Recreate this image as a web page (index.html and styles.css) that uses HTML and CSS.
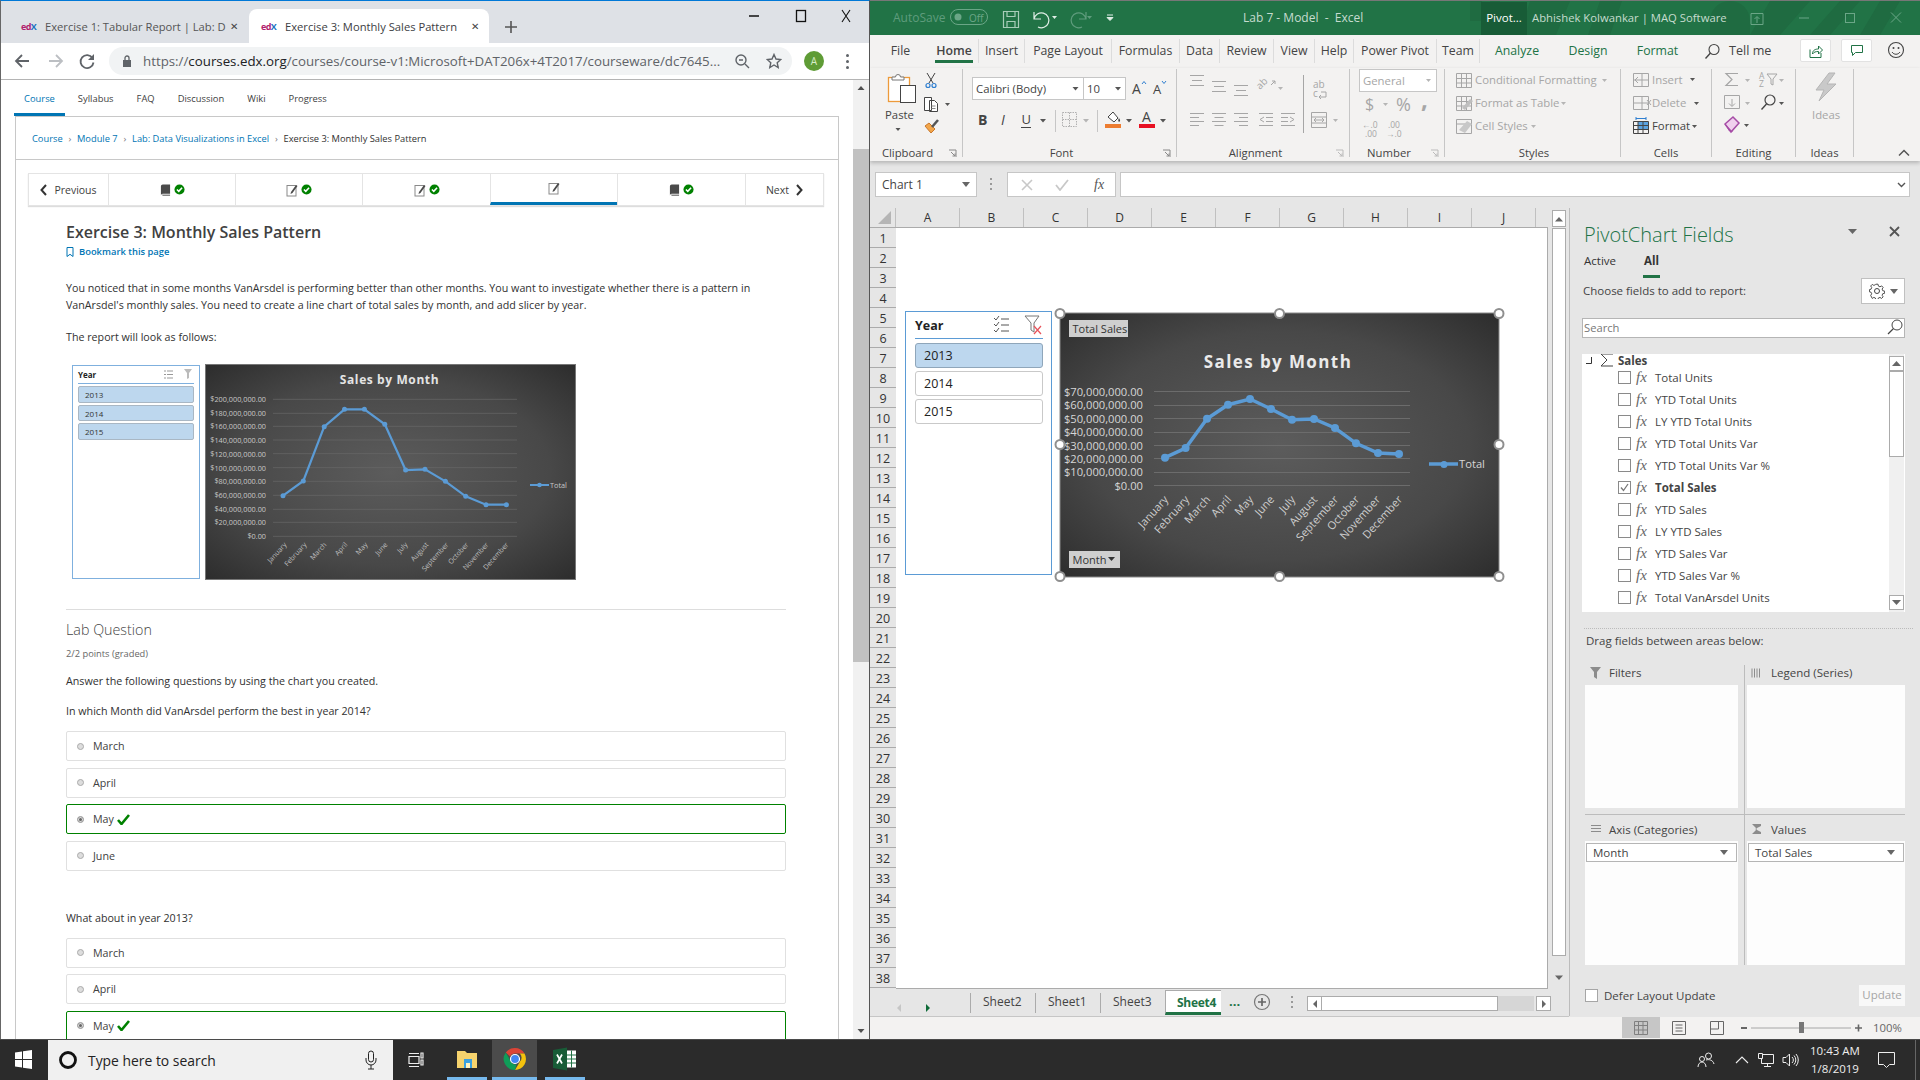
FILE: index.html
```html
<!DOCTYPE html>
<html lang="en">
<head>
<meta charset="utf-8">
<title>edX and Excel</title>
<link rel="stylesheet" href="styles.css">
</head>
<body>
<svg class="defs" width="0" height="0">
  <defs>
    <radialGradient id="dark" r=".72"><stop offset="0" stop-color="#5c5c5c"/><stop offset="0.6" stop-color="#484848"/><stop offset="1" stop-color="#2b2b2b"/></radialGradient>
    <symbol id="book" viewBox="0 0 12 14"><path d="M3 1h8v10H3a2 2 0 0 0-2 2V3a2 2 0 0 1 2-2z" fill="#4a4a4a"/><path d="M2 12h9v1.5H3z" fill="#888"/></symbol>
    <symbol id="pen" viewBox="0 0 12 14"><rect x="1" y="2.5" width="9" height="10.5" fill="#fff" stroke="#8a8a8a"/><path d="M5 9l5-7 1.5 1-5 7-2 1z" fill="#4a4a4a"/></symbol>
    <symbol id="ok" viewBox="0 0 12 12"><circle cx="6" cy="6" r="5.5" fill="#008100"/><path d="M3.2 6l2 2 3.6-4" fill="none" stroke="#fff" stroke-width="1.7"/></symbol>
    <symbol id="tick" viewBox="0 0 13 11"><path d="M1 6l3.500 4L12 1" fill="none" stroke="#008100" stroke-width="2.600"/></symbol>
  </defs>
</svg>
<div class="desktop">

  <section class="chrome">
    <div class="tabstrip">
      <div class="tab">
        <span class="fav"><b class="pink">ed</b><b class="blue">X</b></span>
        <span class="tab-title">Exercise 1: Tabular Report | Lab: D</span>
        <span class="tab-x">✕</span>
      </div>
      <div class="tab tab-on">
        <span class="fav"><b class="pink">ed</b><b class="blue">X</b></span>
        <span class="tab-title">Exercise 3: Monthly Sales Pattern</span>
        <span class="tab-x">✕</span>
      </div>
      <svg class="newtab" width="20" height="20" viewBox="0 0 20 20"><path d="M10 4v12M4 10h12" stroke="#555" stroke-width="1.600"/></svg>
      <svg class="winbtns" width="120" height="30" viewBox="0 0 120 30">
        <path d="M0 15h10" stroke="#111" stroke-width="1.500"/>
        <rect x="47.500" y="9.500" width="9" height="11" fill="none" stroke="#111" stroke-width="1.300"/>
        <path d="M93 9l8 12M101 9l-8 12" stroke="#111" stroke-width="1.100"/>
      </svg>
    </div>
    <div class="toolbar">
      <svg class="nav-ic" width="32" height="20" viewBox="0 0 32 20"><path d="M22 10H10M15 4l-6 6 6 6" fill="none" stroke="#5f6368" stroke-width="1.800"/></svg>
      <svg class="nav-ic" width="32" height="20" viewBox="0 0 32 20"><path d="M10 10h12M17 4l6 6-6 6" fill="none" stroke="#bcbfc3" stroke-width="1.800"/></svg>
      <svg class="nav-ic" width="32" height="20" viewBox="0 0 32 20"><path d="M21.500 7a6.500 6.500 0 1 0 1 4.500" fill="none" stroke="#5f6368" stroke-width="1.800"/><path d="M23 3v6h-6z" fill="#5f6368"/></svg>
      <div class="omni">
        <svg width="12" height="14" viewBox="0 0 12 14"><rect x="2" y="6" width="8" height="7" fill="#5f6368"/><path d="M4 6V4a2 2 0 0 1 4 0v2" fill="none" stroke="#5f6368" stroke-width="1.300"/></svg>
        <div class="url">https://<span class="host">courses.edx.org</span>/courses/course-v1:Microsoft+DAT206x+4T2017/courseware/dc7645...</div>
        <svg class="omni-zoom" width="16" height="16" viewBox="0 0 16 16"><circle cx="7" cy="7" r="5" fill="none" stroke="#5f6368" stroke-width="1.400"/><path d="M11 11l4 4M5 7h4" stroke="#5f6368" stroke-width="1.400"/></svg>
        <svg class="omni-star" width="16" height="16" viewBox="0 0 16 16"><path d="M8 1.500l2 4.500 4.800.5-3.600 3.200 1 4.800L8 12l-4.200 2.500 1-4.800L1.200 6.500 6 6z" fill="none" stroke="#5f6368" stroke-width="1.400"/></svg>
      </div>
      <div class="avatar">A</div>
      <div class="kebab"><i></i><i></i><i></i></div>
    </div>
    <div class="viewport">
      <div class="page">
        <nav class="coursetabs">
          <a class="ct ct-on">Course</a><a class="ct">Syllabus</a><a class="ct">FAQ</a><a class="ct">Discussion</a><a class="ct">Wiki</a><a class="ct">Progress</a>
        </nav>
        <div class="card">
          <div class="crumbs"><a>Course</a><i>›</i><a>Module 7</a><i>›</i><a>Lab: Data Visualizations in Excel</a><i>›</i><span>Exercise 3: Monthly Sales Pattern</span></div>
          <div class="seq">
            <div class="seq-cell seq-end"><svg width="7" height="12" viewBox="0 0 7 12"><path d="M6 1L1.500 6 6 11" fill="none" stroke="#333" stroke-width="2"/></svg><span>Previous</span></div>
            <div class="seq-cell"><svg width="11" height="14"><use href="#book"/></svg><svg width="11" height="11"><use href="#ok"/></svg></div>
            <div class="seq-cell"><svg width="12" height="14"><use href="#pen"/></svg><svg width="11" height="11"><use href="#ok"/></svg></div>
            <div class="seq-cell"><svg width="12" height="14"><use href="#pen"/></svg><svg width="11" height="11"><use href="#ok"/></svg></div>
            <div class="seq-cell seq-on"><svg width="12" height="14"><use href="#pen"/></svg></div>
            <div class="seq-cell"><svg width="11" height="14"><use href="#book"/></svg><svg width="11" height="11"><use href="#ok"/></svg></div>
            <div class="seq-cell seq-end"><span>Next</span><svg width="7" height="12" viewBox="0 0 7 12"><path d="M1 1l4.500 5L1 11" fill="none" stroke="#333" stroke-width="2"/></svg></div>
          </div>
          <article class="unit">
            <h1 class="unit-title">Exercise 3: Monthly Sales Pattern</h1>
            <div class="bookmark"><svg width="8" height="10" viewBox="0 0 8 10"><path d="M1 .5h6v9L4 7.300 1 9.500z" fill="none" stroke="#0075b4"/></svg>Bookmark this page</div>
            <p class="para first">You noticed that in some months VanArsdel is performing better than other months. You want to investigate whether there is a pattern in VanArsdel's monthly sales. You need to create a line chart of total sales by month, and add slicer by year.</p>
            <p class="para second">The report will look as follows:</p>
            <div class="figure">
              <div class="mini-slicer">
                <div class="ms-head"><b>Year</b><svg width="30" height="11" viewBox="0 0 30 11"><path d="M0 2h2M0 5.500h2M0 9h2M3 2h6M3 5.500h6M3 9h6" stroke="#999"/><path d="M20 0h8l-3 4v5l-2 1V4z" fill="#bbb"/></svg></div>
                <div class="ms-item">2013</div><div class="ms-item">2014</div><div class="ms-item">2015</div>
              </div>
              <svg class="mini-chart" width="371" height="216" viewBox="205 364 371 216">
                <rect x="205.500" y="364.500" width="370" height="215" fill="url(#dark)" stroke="#777"/>
                <text class="mc-title" x="389.500" y="384" text-anchor="middle">Sales by Month</text>
                <g stroke="#686868" stroke-width=".7"><path d="M273 399.300h244M273 413.300h244M273 426.300h244M273 440h244M273 453.700h244M273 467.700h244M273 481.300h244M273 495.300h244M273 509.300h244M273 522.300h244M273 536.300h244"/></g>
                <g class="mc-y" text-anchor="end">
                  <text x="266" y="402">$200,000,000.00</text><text x="266" y="416">$180,000,000.00</text><text x="266" y="429">$160,000,000.00</text><text x="266" y="443">$140,000,000.00</text><text x="266" y="456.500">$120,000,000.00</text><text x="266" y="470.500">$100,000,000.00</text><text x="266" y="484">$80,000,000.00</text><text x="266" y="498">$60,000,000.00</text><text x="266" y="512">$40,000,000.00</text><text x="266" y="525">$20,000,000.00</text><text x="266" y="539">$0.00</text>
                </g>
                <polyline points="283,495.700 303.300,481 324.200,426.700 344.500,409.300 364.400,409.300 384.800,424.300 405.600,470 425,469.300 445.400,481.300 465.700,496.300 486,504.700 506.400,504.700" fill="none" stroke="#5b9bd5" stroke-width="2.200"/>
                <g fill="#5b9bd5"><circle cx="283" cy="495.700" r="2.500"/><circle cx="303.300" cy="481" r="2.500"/><circle cx="324.200" cy="426.700" r="2.500"/><circle cx="344.500" cy="409.300" r="2.500"/><circle cx="364.400" cy="409.300" r="2.500"/><circle cx="384.800" cy="424.300" r="2.500"/><circle cx="405.600" cy="470" r="2.500"/><circle cx="425" cy="469.300" r="2.500"/><circle cx="445.400" cy="481.300" r="2.500"/><circle cx="465.700" cy="496.300" r="2.500"/><circle cx="486" cy="504.700" r="2.500"/><circle cx="506.400" cy="504.700" r="2.500"/></g>
                <g class="mc-x" text-anchor="end">
                  <text transform="translate(287,545) rotate(-48)">January</text><text transform="translate(307,545) rotate(-48)">February</text><text transform="translate(327,545) rotate(-48)">March</text><text transform="translate(348,545) rotate(-48)">April</text><text transform="translate(368,545) rotate(-48)">May</text><text transform="translate(388,545) rotate(-48)">June</text><text transform="translate(408,545) rotate(-48)">July</text><text transform="translate(429,545) rotate(-48)">August</text><text transform="translate(449,545) rotate(-48)">September</text><text transform="translate(469,545) rotate(-48)">October</text><text transform="translate(489,545) rotate(-48)">November</text><text transform="translate(509,545) rotate(-48)">December</text>
                </g>
                <path d="M530 485h19" stroke="#5b9bd5" stroke-width="2"/><circle cx="539.500" cy="485" r="2.300" fill="#5b9bd5"/>
                <text class="mc-y" x="550" y="487.500">Total</text>
              </svg>
            </div>
            <hr class="rule">
            <h2 class="lab-q">Lab Question</h2>
            <div class="points">2/2 points (graded)</div>
            <p class="q q-a">Answer the following questions by using the chart you created.</p>
            <p class="q q-b">In which Month did VanArsdel perform the best in year 2014?</p>
            <div class="opt opt-first"><i class="radio"></i>March</div>
            <div class="opt"><i class="radio"></i>April</div>
            <div class="opt opt-ok"><i class="radio radio-on"></i>May<svg width="13" height="11"><use href="#tick"/></svg></div>
            <div class="opt"><i class="radio"></i>June</div>
            <p class="q q-c">What about in year 2013?</p>
            <div class="opt opt-first"><i class="radio"></i>March</div>
            <div class="opt"><i class="radio"></i>April</div>
            <div class="opt opt-ok"><i class="radio radio-on"></i>May<svg width="13" height="11"><use href="#tick"/></svg></div>
          </article>
        </div>
      </div>
      <div class="pagescroll">
        <svg width="16" height="16" viewBox="0 0 16 16"><path d="M4.500 10L8 6l3.500 4z" fill="#505050"/></svg>
        <div class="ps-track"><div class="ps-thumb"></div></div>
        <svg width="16" height="16" viewBox="0 0 16 16"><path d="M4.500 6L8 10l3.500-4z" fill="#505050"/></svg>
      </div>
    </div>
  </section>

  <section class="excel">
    <header class="xl-title">
      <svg class="xl-shapes" width="450" height="34" viewBox="0 0 450 34"><g fill="#1f6b41"><path d="M0 0h12v20H0zM20 0h10v34H20zM60 0h40l-14 34H50zM130 0h22l-12 34h-22zM240 20a20 20 0 0 1 40 0v14h-40zM300 0h40l-30 34h-30zM370 0h20l-30 34h-20zM410 0h20l-20 34h-20z"/></g></svg>
      <svg class="qat" width="255" height="34" viewBox="870 1 255 34">
        <text class="qat-t" x="893" y="22">AutoSave</text>
        <rect x="950.500" y="9.500" width="37" height="15" rx="7.500" fill="none" stroke="#6ba687"/>
        <circle cx="958" cy="17" r="3.500" fill="#6ba687"/><text class="qat-s" x="969" y="21.500">Off</text>
        <path d="M1003.500 11.500h15v16h-15zM1007 11.500v5h8v-5M1007 27.500v-6h8v6" fill="none" stroke="#a8cdb9" stroke-width="1.200"/>
        <path d="M1034 12v7h7M1034 19a7.500 7.500 0 1 1 4 8" fill="none" stroke="#dfeee6" stroke-width="1.200"/><path d="M1052 16l2.500 3 2.500-3z" fill="#dfeee6"/>
        <path d="M1086 12v7h-7M1086 19a7.500 7.500 0 1 0-4 8" fill="none" stroke="#5f9c7d" stroke-width="1.200"/><path d="M1087 16l2.500 3 2.500-3z" fill="#5f9c7d"/>
        <path d="M1107 15h6M1107 17.500l3 3 3-3z" stroke="#dfeee6" fill="#dfeee6"/>
      </svg>
      <span class="xl-doc">Lab 7 - Model&nbsp; -&nbsp; Excel</span>
      <span class="xl-pivot">Pivot...</span>
      <span class="xl-user">Abhishek Kolwankar | MAQ Software</span>
      <svg class="xl-win" width="170" height="34" viewBox="1750 1 170 34">
        <path d="M1751 13.500h12M1751 13.500h12v11h-12zM1757 23v-6M1754.500 19l2.500-2.500 2.500 2.500" fill="none" stroke="#6ba687"/>
        <path d="M1799 18h10" stroke="#6ba687"/>
        <rect x="1845.500" y="13.500" width="9" height="9" fill="none" stroke="#6ba687"/>
        <path d="M1891 12.500l10 10M1901 12.500l-10 10" stroke="#6ba687"/>
      </svg>
    </header>
    <nav class="xl-tabs">
      <a class="rt rt-file">File</a><a class="rt rt-home rt-sep"><b>Home</b></a><a class="rt rt-ins rt-sep">Insert</a><a class="rt rt-pl rt-sep">Page Layout</a><a class="rt rt-fo rt-sep">Formulas</a><a class="rt rt-da rt-sep">Data</a><a class="rt rt-re rt-sep">Review</a><a class="rt rt-vi rt-sep">View</a><a class="rt rt-he rt-sep">Help</a><a class="rt rt-pp rt-sep">Power Pivot</a><a class="rt rt-te rt-sep">Team</a><a class="rt rt-an rt-g">Analyze</a><a class="rt rt-de rt-g">Design</a><a class="rt rt-fm rt-g">Format</a>
      <svg class="tell-ic" width="16" height="17" viewBox="0 0 16 17"><circle cx="10" cy="6.500" r="5" fill="none" stroke="#444" stroke-width="1.100"/><path d="M6.500 10L1.500 15.500" stroke="#444" stroke-width="1.400"/></svg>
      <span class="tell">Tell me</span>
      <span class="xl-btn xl-share"><svg width="14" height="14" viewBox="0 0 14 14"><path d="M1 5.500v8h11V9M3.500 10c0-4 3-5 6-5V2l4 4-4 4V7.500c-3 0-4.500 .5-6 2.500z" fill="none" stroke="#217346"/></svg></span>
      <span class="xl-btn xl-comm"><svg width="14" height="13" viewBox="0 0 14 13"><path d="M1.500 1.500h11v7H5.500l-3 3v-3h-1z" fill="none" stroke="#217346"/></svg></span>
      <svg class="smile" width="18" height="18" viewBox="0 0 18 18"><circle cx="9" cy="9" r="7.500" fill="none" stroke="#444" stroke-width="1.100"/><circle cx="6.500" cy="7" r="1" fill="#444"/><circle cx="11.500" cy="7" r="1" fill="#444"/><path d="M5 11c2 3 6 3 8 0" fill="none" stroke="#444"/></svg>
    </nav>

    <div class="ribbon">
      <div class="grp g-clip">
        <svg class="gi" width="92" height="68" viewBox="870 69 92 68">
          <rect x="888.500" y="77.500" width="21" height="24" fill="#fff" stroke="#ed9a3a" stroke-width="1.300"/>
          <path d="M892 80v-3h3.500a2.500 2.500 0 0 1 5 0h3.500v3z" fill="#fff" stroke="#777"/>
          <rect x="900.500" y="85.500" width="15" height="17" fill="#fff" stroke="#444"/>
          <text class="r12" x="885" y="118.500">Paste</text>
          <path class="ar" d="M895.500 128h5l-2.500 3z"/>
          <path d="M927 73l6 10M935 73l-6 10" stroke="#444"/><circle cx="928" cy="85.500" r="2" fill="none" stroke="#2f7fd0" stroke-width="1.200"/><circle cx="934" cy="85.500" r="2" fill="none" stroke="#2f7fd0" stroke-width="1.200"/>
          <path d="M924.500 97.500h7v13h-7zM929.500 100.500h5l3 3v8h-8z" fill="#fff" stroke="#444"/><path d="M931.500 106h4M931.500 108.500h4" stroke="#888"/>
          <path class="ar" d="M945 103h5l-2.500 3z"/>
          <path d="M925 126l6 7 4-4-6-6z" fill="#f2a64a" stroke="#c9772b"/><path d="M932 127l6-7" stroke="#555" stroke-width="2.500"/>
        </svg>
        <div class="glabel">Clipboard<svg class="launch" width="9" height="9" viewBox="0 0 9 9"><path d="M1 1h7v7M3 3l4 4M4.500 7H7V4.500" fill="none" stroke="#888"/></svg></div>
      </div>
      <div class="grp g-font">
        <svg class="gi" width="214" height="68" viewBox="962 69 214 68">
          <rect x="971.500" y="77.500" width="153" height="22" fill="#fff" stroke="#c6c6c6"/><path d="M1082.500 77v23" stroke="#c6c6c6"/>
          <text class="r12 dk" x="975" y="93">Calibri (Body)</text><path class="ar" d="M1071.500 87h6l-3 3.500z"/>
          <text class="r12 dk" x="1086" y="93">10</text><path class="ar" d="M1114 87h6l-3 3.500z"/>
          <text class="r14 dk" x="1131" y="94">A</text><path d="M1141 84l2-2.500 2 2.500" fill="none" stroke="#2f7fd0"/>
          <text class="r13 dk" x="1152" y="94">A</text><path d="M1161 81l2 2.500 2-2.500" fill="none" stroke="#2f7fd0"/>
          <text class="r14 dk bd" x="977" y="125">B</text>
          <text class="r14 dk it" x="1000" y="125">I</text>
          <text class="r13 dk" x="1020.500" y="124">U</text><path d="M1020 127.500h10" stroke="#444"/>
          <path class="ar" d="M1039 119h6l-3 3.500z"/>
          <path d="M1054.500 110v22M1096.500 110v22" stroke="#c6c6c6"/>
          <path d="M1061.500 112.500h14v14h-14zM1068.500 112.500v14M1061.500 119.500h14" fill="none" stroke="#b0b0b0" stroke-dasharray="1.500 1"/>
          <path class="ar2" d="M1082 119h6l-3 3.500z"/>
          <path d="M1107 117l5-5 5 6-4 4z" fill="#fff" stroke="#444"/><path d="M1118 118c1 2 2 3 0 4-1-1-1-2 0-4z" fill="#444"/>
          <rect x="1104" y="124" width="16" height="4" fill="#ed7d31"/>
          <path class="ar" d="M1125 119h6l-3 3.500z"/>
          <text class="r14 dk" x="1141" y="122">A</text><rect x="1138" y="124" width="16" height="4" fill="#e81123"/>
          <path class="ar" d="M1159 119h6l-3 3.500z"/>
        </svg>
        <div class="glabel">Font<svg class="launch" width="9" height="9" viewBox="0 0 9 9"><path d="M1 1h7v7M3 3l4 4M4.500 7H7V4.500" fill="none" stroke="#888"/></svg></div>
      </div>
      <div class="grp g-align">
        <svg class="gi" width="173" height="68" viewBox="1176 69 173 68">
          <g stroke="#a6a6a6" fill="none">
            <path d="M1189 75.500h14M1191 80.500h10M1189 85.500h14"/>
            <path d="M1211 81.500h14M1213 86.500h10M1211 91.500h14"/>
            <path d="M1233 85.500h14M1235 90.500h10M1233 95.500h14"/>
            <path d="M1189 113.500h14M1189 117.500h9M1189 121.500h14M1189 125.500h9"/>
            <path d="M1211 113.500h14M1213.500 117.500h9M1211 121.500h14M1213.500 125.500h9"/>
            <path d="M1233 113.500h14M1238 117.500h9M1233 121.500h14M1238 125.500h9"/>
            <path d="M1258 113.500h14M1265 117.500h7M1265 121.500h7M1258 125.500h14M1263 117l-4 2.500 4 2.500"/>
            <path d="M1280 113.500h14M1280 117.500h7M1280 121.500h7M1280 125.500h14M1289 117l4 2.500-4 2.500"/>
            <path d="M1270 85l4-4m0 0h-3m3 0v3"/>
            <path d="M1302.500 75v58"/>
            <path d="M1310.500 112.500h15v15h-15zM1310.500 117h15M1310.500 123h15M1313 120h10M1315 118l-2 2 2 2M1321 118l2 2-2 2"/>
            <path d="M1320 92h5v5h-7m2-2l-2 2 2 2"/>
          </g>
          <text class="r10 gy" transform="translate(1259,90) rotate(-45)">ab</text>
          <path class="ar2" d="M1277 87h5l-2.500 3z"/>
          <text class="r10 gy" x="1312" y="88">ab</text><text class="r10 gy" x="1312" y="97">c</text>
          <path class="ar2" d="M1332 119h5l-2.500 3z"/>
        </svg>
        <div class="glabel">Alignment<svg class="launch" width="9" height="9" viewBox="0 0 9 9"><path d="M1 1h7v7M3 3l4 4M4.500 7H7V4.500" fill="none" stroke="#bbb"/></svg></div>
      </div>
      <div class="grp g-num">
        <svg class="gi" width="95" height="68" viewBox="1349 69 95 68">
          <rect x="1358.500" y="69.500" width="77" height="22" fill="#fff" stroke="#c6c6c6"/>
          <text class="r12 gy" x="1362" y="85">General</text><path class="ar2" d="M1425 79h5l-2.500 3z"/>
          <text class="r16 gy" x="1364" y="110">$</text><path class="ar2" d="M1382 103h5l-2.500 3z"/>
          <text class="r18 gy" x="1395" y="111">%</text>
          <text class="r22 gy bd" x="1420" y="108">,</text>
          <text class="r9 gy" x="1361" y="128">←.0</text><text class="r9 gy" x="1364" y="137">.00</text>
          <text class="r9 gy" x="1387" y="128">.00</text><text class="r9 gy" x="1385" y="137">→.0</text>
        </svg>
        <div class="glabel">Number<svg class="launch" width="9" height="9" viewBox="0 0 9 9"><path d="M1 1h7v7M3 3l4 4M4.500 7H7V4.500" fill="none" stroke="#bbb"/></svg></div>
      </div>
      <div class="grp g-sty">
        <svg class="gi" width="176" height="68" viewBox="1444 69 176 68">
          <g fill="none" stroke="#a6a6a6">
            <path d="M1455.500 73.500h15v14h-15zM1460.500 73.500v14M1465.500 73.500v14M1455.500 78.500h15M1455.500 83h15"/>
            <path d="M1455.500 96.500h15v14h-15zM1460.500 96.500v14M1465.500 96.500v14M1455.500 101.500h15M1455.500 106h15"/>
            <path d="M1455.500 119.500h15v14h-15zM1455.500 124h15"/>
          </g>
          <path d="M1461 108l8-9 3 2-8 9z" fill="#bfbfbf"/><path d="M1458 130l8-9 5 3-7 9z" fill="#c8c8c8"/>
          <text class="r12 gy" x="1474" y="84">Conditional Formatting</text><path class="ar2" d="M1601 79h5l-2.500 3z"/>
          <text class="r12 gy" x="1474" y="107">Format as Table</text><path class="ar2" d="M1560 102h5l-2.500 3z"/>
          <text class="r12 gy" x="1474" y="130">Cell Styles</text><path class="ar2" d="M1530 125h5l-2.500 3z"/>
        </svg>
        <div class="glabel">Styles</div>
      </div>
      <div class="grp g-cells">
        <svg class="gi" width="91" height="68" viewBox="1620 69 91 68">
          <g fill="none" stroke="#a6a6a6"><path d="M1632.500 73.500h15v13h-15zM1641 73.500v13M1632.500 80h15M1637 77l-3 3 3 3"/><path d="M1632.500 96.500h15v13h-15zM1641 96.500v13M1632.500 103h15M1646 100l4 5M1650 100l-4 5"/></g>
          <text class="r12 gy" x="1651" y="84">Insert</text><path class="ar" d="M1689 78h5l-2.500 3z"/>
          <text class="r12 gy" x="1651" y="107">Delete</text><path class="ar" d="M1693 102h5l-2.500 3z"/>
          <rect x="1637" y="122" width="10" height="8" fill="#5ba3e0"/>
          <path d="M1632.500 121.500h15v12h-15zM1632.500 125.500h15M1632.500 129.500h15M1637 121.500v12M1642 121.500v12" fill="none" stroke="#444"/>
          <path d="M1635 118.500h10M1635 117v3M1645 117v3" stroke="#2f7fd0"/>
          <text class="r12 dk" x="1651" y="130">Format</text><path class="ar" d="M1691 125h5l-2.500 3z"/>
        </svg>
        <div class="glabel">Cells</div>
      </div>
      <div class="grp g-edit">
        <svg class="gi" width="84" height="68" viewBox="1711 69 84 68">
          <path d="M1737 73.500h-12l6 6-6 6h12" fill="none" stroke="#a6a6a6" stroke-width="1.200"/>
          <path class="ar2" d="M1744 79h5l-2.500 3z"/>
          <text class="r9 gy" x="1758" y="79">A</text><text class="r9 gy" x="1758" y="87">Z</text>
          <path d="M1766 74h10l-4 5v6l-2-1v-5z" fill="none" stroke="#a6a6a6"/>
          <path class="ar2" d="M1778 79h5l-2.500 3z"/>
          <path d="M1723.500 95.500h15v13h-15zM1731 99v7M1728 103.500l3 3 3-3" fill="none" stroke="#a6a6a6"/>
          <path class="ar2" d="M1744 102h5l-2.500 3z"/>
          <circle cx="1769" cy="100" r="5" fill="none" stroke="#444" stroke-width="1.200"/><path d="M1765.500 104l-5 5.500" stroke="#444" stroke-width="1.400"/>
          <path class="ar" d="M1778 102h5l-2.500 3z"/>
          <path d="M1724 124l8-7 6 6-8 9z" fill="#f0d0ee" stroke="#a64ca6" stroke-width="1.500"/><path d="M1724 124l5 5 3 3-4-1z" fill="#a64ca6"/>
          <path class="ar" d="M1743 124h5l-2.500 3z"/>
        </svg>
        <div class="glabel">Editing</div>
      </div>
      <div class="grp g-ideas">
        <svg class="gi" width="58" height="68" viewBox="1795 69 58 68">
          <path d="M1828 73L1815 90h8l-5 11 17-17h-9l8-11z" fill="#c9c9c9" stroke="#b5b5b5"/>
          <text class="r12 gy" x="1811" y="118.500">Ideas</text>
        </svg>
        <div class="glabel">Ideas</div>
      </div>
      <svg class="collapse" width="12" height="8" viewBox="0 0 12 8"><path d="M1 6.500l5-5 5 5" fill="none" stroke="#555" stroke-width="1.500"/></svg>
    </div>

    <div class="fbar">
      <div class="namebox">Chart 1<svg width="8" height="5" viewBox="0 0 8 5"><path d="M0 0h8L4 5z" fill="#666"/></svg></div>
      <div class="fdots"><i></i><i></i><i></i></div>
      <div class="fbtns">
        <svg width="12" height="12" viewBox="0 0 12 12"><path d="M1 1l10 10M11 1L1 11" stroke="#c8c8c8" stroke-width="1.600"/></svg>
        <svg width="14" height="12" viewBox="0 0 14 12"><path d="M1 6l4 5 8-10" fill="none" stroke="#c8c8c8" stroke-width="1.800"/></svg>
        <span class="fx">fx</span>
      </div>
      <div class="finput"><svg width="9" height="6" viewBox="0 0 9 6"><path d="M1 1l3.500 3.500L8 1" fill="none" stroke="#555" stroke-width="1.400"/></svg></div>
    </div>

    <div class="xl-main">
      <div class="workbook">
        <div class="sheet">
          <div class="gridwrap">
            <div class="colhead">
              <span class="corner"><svg width="14" height="14" viewBox="0 0 14 14"><path d="M14 1v13H1z" fill="#b5b5b5"/></svg></span>
              <span>A</span><span>B</span><span>C</span><span>D</span><span>E</span><span>F</span><span>G</span><span>H</span><span>I</span><span>J</span>
            </div>
            <div class="gridbody">
              <div class="rowhead">
                <div>1</div><div>2</div><div>3</div><div>4</div><div>5</div><div>6</div><div>7</div><div>8</div><div>9</div><div>10</div><div>11</div><div>12</div><div>13</div><div>14</div><div>15</div><div>16</div><div>17</div><div>18</div><div>19</div><div>20</div><div>21</div><div>22</div><div>23</div><div>24</div><div>25</div><div>26</div><div>27</div><div>28</div><div>29</div><div>30</div><div>31</div><div>32</div><div>33</div><div>34</div><div>35</div><div>36</div><div>37</div><div>38</div>
              </div>
              <div class="cells"></div>
            </div>
            <div class="slicer">
              <div class="sl-head"><b>Year</b>
                <svg width="50" height="20" viewBox="0 0 50 20"><path d="M1 3l2 2 3-4M1 9l2 2 3-4M1 15l2 2 3-4M8 4h8M8 10h8M8 16h8" fill="none" stroke="#555"/><path d="M32 1h14l-5 7v9l-3-2V8z" fill="none" stroke="#777"/><path d="M41 11l7 8M48 11l-7 8" stroke="#e8525a" stroke-width="1.200"/></svg>
              </div>
              <div class="sl-item sl-on">2013</div>
              <div class="sl-item">2014</div>
              <div class="sl-item">2015</div>
            </div>
            <svg class="chartobj" width="452" height="277" viewBox="1054 306 452 277">
              <rect x="1060" y="313" width="439" height="264" fill="url(#dark)" stroke="#8a8a8a"/>
              <rect class="btn-f" x="1069" y="320" width="59" height="17"/><text class="cb" x="1072.500" y="333">Total Sales</text>
              <rect class="btn-f" x="1069" y="551" width="51" height="17"/><text class="cb" x="1072.500" y="564">Month</text><path d="M1108 557h7l-3.500 4z" fill="#333"/>
              <text class="ct-title" x="1278" y="368" text-anchor="middle">Sales by Month</text>
              <g stroke="#6c6c6c"><path d="M1154 391.500h256M1154 405.500h256M1154 418.500h256M1154 432.500h256M1154 445.500h256M1154 458.500h256M1154 472.500h256M1154 485.500h256"/></g>
              <g class="ct-y" text-anchor="end"><text x="1143" y="396">$70,000,000.00</text><text x="1143" y="409">$60,000,000.00</text><text x="1143" y="423">$50,000,000.00</text><text x="1143" y="436">$40,000,000.00</text><text x="1143" y="450">$30,000,000.00</text><text x="1143" y="463">$20,000,000.00</text><text x="1143" y="476">$10,000,000.00</text><text x="1143" y="490">$0.00</text></g>
              <polyline points="1165,457.700 1185.600,448 1207,418.700 1228,404.700 1250,399 1271,409 1292,419.700 1314,419 1335,428 1356,443.300 1378,453 1399,454" fill="none" stroke="#5b9bd5" stroke-width="3.500"/>
              <g fill="#5b9bd5"><circle cx="1165" cy="457.700" r="4"/><circle cx="1185.600" cy="448" r="4"/><circle cx="1207" cy="418.700" r="4"/><circle cx="1228" cy="404.700" r="4"/><circle cx="1250" cy="399" r="4"/><circle cx="1271" cy="409" r="4"/><circle cx="1292" cy="419.700" r="4"/><circle cx="1314" cy="419" r="4"/><circle cx="1335" cy="428" r="4"/><circle cx="1356" cy="443.300" r="4"/><circle cx="1378" cy="453" r="4"/><circle cx="1399" cy="454" r="4"/></g>
              <g class="ct-x" text-anchor="end"><text transform="translate(1169,500) rotate(-48)">January</text><text transform="translate(1190,500) rotate(-48)">February</text><text transform="translate(1211,500) rotate(-48)">March</text><text transform="translate(1232,500) rotate(-48)">April</text><text transform="translate(1254,500) rotate(-48)">May</text><text transform="translate(1275,500) rotate(-48)">June</text><text transform="translate(1296,500) rotate(-48)">July</text><text transform="translate(1318,500) rotate(-48)">August</text><text transform="translate(1339,500) rotate(-48)">September</text><text transform="translate(1360,500) rotate(-48)">October</text><text transform="translate(1381,500) rotate(-48)">November</text><text transform="translate(1403,500) rotate(-48)">December</text></g>
              <path d="M1429 464h29" stroke="#5b9bd5" stroke-width="3.500"/><circle cx="1444" cy="464.500" r="3.500" fill="#5b9bd5"/>
              <text class="ct-y" x="1459" y="468">Total</text>
              <g fill="#fff" stroke="#8f8f8f" stroke-width="2"><circle cx="1060" cy="313.500" r="4.500"/><circle cx="1279.500" cy="313.500" r="4.500"/><circle cx="1499" cy="313.500" r="4.500"/><circle cx="1060" cy="444.500" r="4.500"/><circle cx="1499" cy="444.500" r="4.500"/><circle cx="1060" cy="576.500" r="4.500"/><circle cx="1279.500" cy="576.500" r="4.500"/><circle cx="1499" cy="576.500" r="4.500"/></g>
            </svg>
          </div>
          <div class="vscroll">
            <span class="sb-btn"><svg width="10" height="6" viewBox="0 0 10 6"><path d="M1 5.500L5 1l4 4.500z" fill="#666"/></svg></span>
            <div class="vs-thumb"></div>
            <span class="sb-btn sb-plain"><svg width="10" height="6" viewBox="0 0 10 6"><path d="M1 .5L5 5l4-4.500z" fill="#666"/></svg></span>
          </div>
        </div>
        <div class="sheetbar">
          <div class="sheetnav"><svg width="68" height="12" viewBox="0 0 68 12"><path d="M21 2v8l-4-4z" fill="#c6c6c6"/><path d="M46 2v8l4-4z" fill="#0e6b38"/></svg></div>
          <div class="stab">Sheet2</div><div class="stab">Sheet1</div><div class="stab">Sheet3</div><div class="stab stab-on">Sheet4</div>
          <div class="smore">...</div>
          <svg class="splus" width="18" height="18" viewBox="0 0 18 18"><circle cx="9" cy="9" r="7.500" fill="none" stroke="#777" stroke-width="1.200"/><path d="M9 5v8M5 9h8" stroke="#666" stroke-width="1.700"/></svg>
          <div class="sdots"><i></i><i></i><i></i></div>
          <div class="hscroll">
            <span class="hs-btn"><svg width="6" height="8" viewBox="0 0 6 8"><path d="M5 0v8L1 4z" fill="#666"/></svg></span>
            <div class="hs-thumb"></div><div class="hs-track"></div>
            <span class="hs-btn hs-r"><svg width="6" height="8" viewBox="0 0 6 8"><path d="M1 0v8l4-4z" fill="#666"/></svg></span>
          </div>
        </div>
      </div>

      <aside class="pane">
        <div class="pane-top"><span class="pane-title">PivotChart Fields</span>
          <svg class="pt-ic" width="60" height="12" viewBox="0 0 60 12"><path d="M0 3h9L4.500 8z" fill="#666"/><path d="M42 1l9 9M51 1l-9 9" stroke="#555" stroke-width="1.800"/></svg></div>
        <div class="pane-tabs"><span class="pt">Active</span><span class="pt pt-on">All</span></div>
        <div class="choose"><span>Choose fields to add to report:</span>
          <div class="gear"><svg width="16" height="16" viewBox="0 0 16 16"><circle cx="8" cy="8" r="2.500" fill="none" stroke="#444"/><path d="M6.800 1h2.400l.4 2 1.700.8 1.800-1 1.600 1.700-1.100 1.700.7 1.800 2 .4v2.400l-2 .4-.7 1.700 1.100 1.700-1.700 1.700-1.700-1.100-1.800.7-.4 2H6.800l-.4-2-1.700-.7-1.700 1.100L1.300 13l1.100-1.700-.7-1.700-1.700-.4V6.800l1.700-.4.700-1.800-1.100-1.700L3 1.200l1.700 1.100 1.700-.8z" transform="scale(.93) translate(.5,.3)" fill="none" stroke="#444"/></svg><svg width="8" height="5" viewBox="0 0 8 5"><path d="M0 0h8L4 5z" fill="#666"/></svg></div>
        </div>
        <div class="psearch"><span>Search</span><svg width="16" height="16" viewBox="0 0 16 16"><circle cx="10" cy="6" r="5" fill="none" stroke="#444"/><path d="M6.500 9.500L1 15" stroke="#444" stroke-width="1.200"/></svg></div>
        <div class="fields">
          <div class="flist">
            <div class="fgroup"><svg class="tree" width="33" height="15" viewBox="0 0 33 15"><path d="M5.500 4v6.500H0" transform="translate(1,0)" fill="none" stroke="#333"/><path d="M30 1H18l6 6-6 6h12" transform="translate(-2,0)" fill="none" stroke="#444"/></svg><b>Sales</b></div>
            <div class="frow"><i class="cb-box"></i><span class="fxs">fx</span>Total Units</div>
            <div class="frow"><i class="cb-box"></i><span class="fxs">fx</span>YTD Total Units</div>
            <div class="frow"><i class="cb-box"></i><span class="fxs">fx</span>LY YTD Total Units</div>
            <div class="frow"><i class="cb-box"></i><span class="fxs">fx</span>YTD Total Units Var</div>
            <div class="frow"><i class="cb-box"></i><span class="fxs">fx</span>YTD Total Units Var %</div>
            <div class="frow frow-on"><i class="cb-box"><svg width="11" height="11" viewBox="0 0 11 11"><path d="M2 5.500l2.500 3L9 2" fill="none" stroke="#777" stroke-width="1.300"/></svg></i><span class="fxs">fx</span><b>Total Sales</b></div>
            <div class="frow"><i class="cb-box"></i><span class="fxs">fx</span>YTD Sales</div>
            <div class="frow"><i class="cb-box"></i><span class="fxs">fx</span>LY YTD Sales</div>
            <div class="frow"><i class="cb-box"></i><span class="fxs">fx</span>YTD Sales Var</div>
            <div class="frow"><i class="cb-box"></i><span class="fxs">fx</span>YTD Sales Var %</div>
            <div class="frow"><i class="cb-box"></i><span class="fxs">fx</span>Total VanArsdel Units</div>
          </div>
          <div class="fscroll">
            <span class="fs-btn"><svg width="9" height="5" viewBox="0 0 9 5"><path d="M0 5l4.500-5L9 5z" fill="#666"/></svg></span>
            <div class="fs-thumb"></div>
            <span class="fs-btn fs-end"><svg width="9" height="5" viewBox="0 0 9 5"><path d="M0 0l4.500 5L9 0z" fill="#666"/></svg></span>
          </div>
        </div>
        <div class="drag">Drag fields between areas below:</div>
        <div class="zones">
          <div class="zone z-tl"><div class="zh"><svg width="13" height="12" viewBox="0 0 13 12"><path d="M1 0h11L8 5v7L5 10V5z" fill="#8c8c8c"/></svg>Filters</div><div class="zbox"></div></div>
          <div class="zone z-tr"><div class="zh"><svg width="13" height="12" viewBox="0 0 13 12"><path d="M1 1.500v9M3.500 1.500v9M6 1.500v9M8.500 1.500v9" stroke="#8c8c8c" fill="none"/></svg>Legend (Series)</div><div class="zbox"></div></div>
          <div class="zone z-bl"><div class="zh"><svg width="13" height="12" viewBox="0 0 13 12"><path d="M2 2.500h10M2 5.500h10M2 8.500h10" stroke="#8c8c8c" fill="none"/></svg>Axis (Categories)</div><div class="zbox"><div class="pill">Month<svg width="8" height="5" viewBox="0 0 8 5"><path d="M0 0h8L4 5z" fill="#666"/></svg></div></div></div>
          <div class="zone z-br"><div class="zh"><svg width="13" height="12" viewBox="0 0 13 12"><path d="M1 1h9v2L4 6l6 3v2H1l5-5z" fill="#8c8c8c"/></svg>Values</div><div class="zbox"><div class="pill pill-r">Total Sales<svg width="8" height="5" viewBox="0 0 8 5"><path d="M0 0h8L4 5z" fill="#666"/></svg></div></div></div>
        </div>
        <div class="defer"><i class="cb-box cb-white"></i><span>Defer Layout Update</span><span class="update">Update</span></div>
      </aside>
    </div>

    <footer class="status">
      <svg width="298" height="21" viewBox="1622 1018 298 21">
        <rect x="1622" y="1018" width="38" height="21" fill="#c6c6c6"/>
        <path d="M1634.500 1022.500h13v13h-13zM1638.500 1022.500v13M1643 1022.500v13M1634.500 1026.500h13M1634.500 1031h13" fill="none" stroke="#808080"/>
        <path d="M1672.500 1022.500h13v13h-13zM1675.500 1026h7M1675.500 1029h7M1675.500 1032h7" fill="none" stroke="#666"/>
        <path d="M1710.500 1022.500h13v13h-13zM1710.500 1030h8v-7.500" fill="none" stroke="#666"/>
        <path d="M1741 1029h6" stroke="#666" stroke-width="2"/>
        <path d="M1751 1029h100" stroke="#a6a6a6"/><rect x="1799" y="1023" width="5" height="11" fill="#777"/>
        <path d="M1855 1029h7M1858.500 1025.500v7" stroke="#666" stroke-width="1.600"/>
        <text class="r12 st" x="1873" y="1033">100%</text>
      </svg>
    </footer>
  </section>

  <footer class="taskbar">
    <svg class="win" width="48" height="41" viewBox="0 0 48 41"><path d="M15 13.500l7-1v7.500h-7zM23 12.300l9-1.300v9h-9zM15 21h7v7.500l-7-1zM23 21h9v9l-9-1.300z" fill="#fff"/></svg>
    <div class="tsearch">
      <svg width="20" height="20" viewBox="0 0 20 20"><circle cx="10" cy="10" r="7.500" fill="none" stroke="#111" stroke-width="2.800"/></svg>
      <span>Type here to search</span>
      <svg width="14" height="20" viewBox="0 0 14 20"><rect x="4.500" y="1" width="5" height="11" rx="2.500" fill="none" stroke="#222"/><path d="M2 8v2a5 5 0 0 0 10 0V8M7 15v4M4 19h6" fill="none" stroke="#222"/></svg>
    </div>
    <svg class="tv" width="16" height="16" viewBox="0 0 16 16"><path d="M1 4.500h10v7H1zM1 1.500h10M1 14.500h10M13 1v5h2V1zM13 8v5h2V8z" fill="none" stroke="#eee" stroke-width="1.200"/></svg>
    <div class="tk tk-fe"><svg width="22" height="20" viewBox="0 0 22 20"><path d="M1 2h8l2 2h10v15H1z" fill="#f6d36d"/><path d="M8 10h8v9H8z" fill="#3aa0e0"/><path d="M10 14h4v5h-4z" fill="#fff3c0"/></svg></div>
    <div class="tk tk-ch"><svg width="24" height="24" viewBox="0 0 24 24"><path d="M12 1a11 11 0 0 1 9.500 5.500H12a5.500 5.500 0 0 0-5 3L2.800 5.500A11 11 0 0 1 12 1z" fill="#db4437"/><path d="M21.500 6.500A11 11 0 0 1 12 23l5-8.500a5.500 5.500 0 0 0-.300-8z" fill="#f4c20d"/><path d="M12 23A11 11 0 0 1 2.800 5.500L7.500 14a5.500 5.500 0 0 0 6 3.300z" fill="#0f9d58"/><circle cx="12" cy="12" r="4.500" fill="#4285f4" stroke="#fff" stroke-width="1.200"/></svg></div>
    <div class="tk tk-xl"><svg width="24" height="24" viewBox="0 0 24 24"><path d="M0 3l14-2.500v23L0 21z" fill="#185c37"/><path d="M14 3.500h9v17h-9z" fill="#fff"/><path d="M14 8h9M14 12h9M14 16h9M18.500 3.500v17" stroke="#217346"/><path d="M4 7.500l5 9M9 7.500l-5 9" stroke="#fff" stroke-width="1.700"/></svg></div>
    <div class="tray">
      <svg width="18" height="18" viewBox="0 0 18 18"><circle cx="11.500" cy="5" r="3" fill="none" stroke="#eee"/><circle cx="5" cy="8" r="2.500" fill="none" stroke="#eee"/><path d="M1 16c0-3 2-5 4-5s4 2 4 5M9 9c3-1 7 0 8 4" fill="none" stroke="#eee"/></svg>
      <svg class="tr-up" width="14" height="8" viewBox="0 0 14 8"><path d="M1 7l6-6 6 6" fill="none" stroke="#eee" stroke-width="1.100"/></svg>
      <svg class="tr-net" width="16" height="16" viewBox="0 0 16 16"><path d="M3.500 2.500h12v9h-12zM9.500 11.500v3M6 14.500h7" fill="none" stroke="#eee"/><path d="M.5 1.500h4v5h-4z" fill="#2b2b2b" stroke="#eee"/></svg>
      <svg class="tr-vol" width="17" height="16" viewBox="0 0 17 16"><path d="M1 5.500h3l3.500-3.500v12L4 10.500H1z" fill="none" stroke="#eee"/><path d="M10 5a4 4 0 0 1 0 6M12 3.500a6.500 6.500 0 0 1 0 9M14 2a9 9 0 0 1 0 12" fill="none" stroke="#eee"/></svg>
      <div class="clock"><span>10:43 AM</span><span>1/8/2019</span></div>
      <svg class="tr-note" width="17" height="16" viewBox="0 0 17 16"><path d="M.5 .5h16v12h-5l-3 3-3-3h-5z" fill="none" stroke="#eee"/></svg>
      <i class="showdesk"></i>
    </div>
  </footer>
</div>
</body>
</html>
```

FILE: styles.css
```css
* { box-sizing: border-box; }
html, body { margin: 0; padding: 0; overflow: hidden; }
body { width: 1920px; height: 1080px; font-family: "Open Sans", "Noto Sans", sans-serif; color: #333; background: #2b2b2b; }
.defs { display: block; height: 0; }
p, h1, h2 { margin: 0; font-weight: 400; }
a { color: inherit; text-decoration: none; }
i { font-style: normal; }

.desktop { display: grid; grid-template-columns: 870px 1050px; grid-template-rows: 1039px 41px; width: 1920px; height: 1080px; }

/* ---------- browser ---------- */
.chrome { display: flex; flex-direction: column; overflow: hidden; background: #fff; border-top: 1px solid #0078d7; border-left: 1px solid #666; border-right: 1px solid #555; }
.tabstrip { display: flex; align-items: flex-end; height: 42px; flex: none; background: #dee1e6; }
.tab { display: flex; align-items: center; width: 240px; height: 34px; margin-left: 7px; padding: 0 10px 0 13px; font-size: 11.200px; color: #555; }
.tab-on { margin-left: 1px; padding-left: 12px; background: #fff; border-radius: 8px 8px 0 0; color: #3c4043; }
.fav { display: flex; width: 17px; flex: none; font-size: 9px; letter-spacing: -.6px; margin-right: 7px; }
.pink { color: #b11d6e; }
.blue { color: #1b6fc0; }
.tab-title { flex: 1; white-space: nowrap; width: 0; }
.tab-x { flex: none; width: 18px; font-size: 10px; text-align: right; color: #444; }
.newtab { margin: 0 0 6px 12px; }
.winbtns { margin: 0 0 auto auto; }
.toolbar { display: flex; align-items: center; height: 37px; flex: none; padding-left: 6px; border-bottom: 1px solid #b4b4b4; background: #fff; }
.nav-ic { flex: none; }
.omni { display: flex; align-items: center; width: 683px; height: 28px; margin-left: 6px; padding: 0 10px 0 12px; background: #f1f3f4; border-radius: 14px; }
.url { flex: 1; margin-left: 10px; font-size: 13.300px; white-space: nowrap; overflow: hidden; color: #5f6368; }
.host { color: #202124; }
.omni-zoom { margin-left: 6px; }
.omni-star { margin-left: 16px; }
.avatar { width: 20px; height: 20px; margin-left: 12px; border-radius: 50%; background: #5f9c36; color: #d8ecc8; font-size: 10px; line-height: 20px; text-align: center; flex: none; }
.kebab { display: flex; flex-direction: column; gap: 3px; margin-left: 22px; }
.kebab i { width: 3px; height: 3px; border-radius: 50%; background: #5f6368; }
.viewport { display: flex; flex: 1; min-height: 0; }
.page { flex: 1; min-width: 0; overflow: hidden; padding-left: 13px; }
.coursetabs { display: flex; gap: 3px; height: 36px; }
.ct { display: flex; align-items: center; padding: 3px 10px 0; font-size: 9.400px; color: #414141; border-bottom: 3px solid transparent; }
.ct-on { color: #0075b4; border-bottom-color: #0075b4; }
.card { width: 824px; margin-left: 1px; border: 1px solid #c8c8c8; border-bottom: 0; }
.crumbs { display: flex; align-items: center; height: 43px; padding-left: 16px; font-size: 9.300px; color: #313131; border-bottom: 1px solid #c8c8c8; }
.crumbs a { color: #0075b4; }
.crumbs i { margin: 0 5.800px; color: #777; }
.seq { display: grid; grid-template-columns: 79px 127px 127px 128px 127px 128px 78px; height: 33px; margin: 13px 14px 0 12px; border: 1px solid #e4e4e4; box-shadow: 0 1px 1px #ddd; }
.seq-cell { display: flex; align-items: center; justify-content: center; gap: 3px; border-left: 1px solid #e4e4e4; }
.seq-cell:first-child { border-left: 0; }
.seq-end { gap: 7px; font-size: 10.500px; color: #414141; }
.seq-on { border-bottom: 3px solid #0075b4; }
.unit { width: 720px; margin-left: 50px; }
.unit-title { margin-top: 15px; font-size: 16px; line-height: 22px; color: #414141; font-weight: 600; }
.bookmark { display: flex; align-items: center; gap: 5px; margin-top: 2px; font-size: 9.400px; line-height: 14px; color: #0075b4; font-weight: 600; }
.para { font-size: 10.700px; line-height: 17px; color: #313131; }
.first { margin-top: 21px; }
.second { margin-top: 15px; }
.figure { display: flex; gap: 5px; height: 216px; margin-top: 18px; padding-left: 6px; }
.mini-slicer { width: 128px; height: 214px; margin-top: 1px; padding: 0 5px; background: #fff; border: 1px solid #7fb0de; }
.ms-head { display: flex; align-items: center; justify-content: space-between; height: 18px; font-size: 8px; color: #222; border-bottom: 1px solid #7fb0de; }
.ms-item { height: 16.500px; margin-top: 2px; padding-left: 6px; font-size: 8px; line-height: 16px; color: #333; background: #bdd7ee; border: 1px solid #a9b7c4; border-radius: 2px; }
.mc-title { font-size: 12px; font-weight: 700; fill: #e4e4e4; letter-spacing: .6px; }
.mc-y { font-size: 7.300px; fill: #c8c8c8; }
.mc-x { font-size: 7px; fill: #bdbdbd; }
.rule { height: 1px; margin: 29px 0 0; border: 0; background: #ddd; }
.lab-q { margin-top: 10px; font-size: 14.300px; line-height: 20px; color: #444; font-weight: 300; }
.points { margin-top: 7px; font-size: 9.300px; line-height: 14px; color: #666; }
.q { font-size: 10.700px; line-height: 16px; color: #313131; }
.q-a { margin-top: 12px; }
.q-b { margin-top: 14px; }
.q-c { margin-top: 39px; }
.opt { display: flex; align-items: center; height: 30px; margin-bottom: 6.600px; padding-left: 10px; font-size: 10.700px; color: #414141; background: #fff; border: 1px solid #e0e0e0; border-radius: 2px; }
.opt-first { margin-top: 12px; }
.opt-ok { border-color: #008100; }
.opt-ok svg { margin-left: 3px; }
.radio { flex: none; width: 7px; height: 7px; margin-right: 9px; border-radius: 50%; border: 1px solid #aaa; background: #ddd; }
.radio-on { background: #666; box-shadow: inset 0 0 0 1px #ddd; }
.pagescroll { display: flex; flex-direction: column; width: 16px; flex: none; background: #f1f1f1; }
.ps-track { flex: 1; padding-top: 53px; }
.ps-thumb { height: 513px; background: #c1c1c1; }

/* ---------- excel ---------- */
.excel { display: flex; flex-direction: column; overflow: hidden; background: #e6e6e6; border-top: 1px solid #777; }
.xl-title { position: relative; display: flex; align-items: center; height: 34px; flex: none; padding-bottom: 1px; background: #217346; color: #c6dccf; font-size: 12px; }
.xl-shapes { position: absolute; right: 0; top: 0; }
.qat { position: relative; flex: none; margin-bottom: -1px; }
.qat-t { font-size: 12px; fill: #5f9c7d; }
.qat-s { font-size: 10px; fill: #6ba687; }
.xl-doc { position: relative; width: 118px; margin-left: 118px; white-space: nowrap; flex: none; }
.xl-pivot { position: relative; width: 46px; height: 33px; margin-left: 120px; margin-top: 1px; margin-bottom: -1px; flex: none; background: #185c37; color: #fff; font-size: 11.500px; line-height: 31px; text-align: center; }
.xl-user { position: relative; width: 218px; margin-left: 5px; white-space: nowrap; flex: none; font-size: 11.300px; }
.xl-win { position: relative; flex: none; margin-bottom: -1px; }
.xl-tabs { display: flex; height: 33px; flex: none; padding-top: 4px; background: #f3f2f1; }
.rt { display: block; height: 24px; font-size: 12.300px; line-height: 23px; text-align: center; color: #444; flex: none; white-space: nowrap; }
.rt b { display: block; width: 38px; height: 24px; margin-left: 4px; font-weight: 600; border-bottom: 3px solid #217346; }
.rt-sep { border-right: 1px solid #dcdcdc; }
.rt-g { color: #217346; }
.rt-file { width: 61px; }
.rt-home { width: 48px; }
.rt-ins { width: 46px; }
.rt-pl { width: 87px; }
.rt-fo { width: 68px; }
.rt-da { width: 40px; }
.rt-re { width: 54px; }
.rt-vi { width: 41px; }
.rt-he { width: 39px; }
.rt-pp { width: 83px; }
.rt-te { width: 43px; }
.rt-an { width: 74px; }
.rt-de { width: 68px; }
.rt-fm { width: 71px; }
.tell-ic { margin: 4px 0 0 11px; flex: none; }
.tell { margin-left: 9px; width: 71px; font-size: 12.600px; line-height: 23px; color: #444; flex: none; }
.xl-btn { display: flex; align-items: center; justify-content: center; width: 31px; height: 23px; background: #fff; border: 1px solid #e2e2e2; border-radius: 2px; flex: none; }
.xl-comm { margin-left: 10px; }
.smile { margin: 2px 0 0 15px; flex: none; }
.ribbon { position: relative; display: flex; height: 93px; flex: none; background: #f3f2f1; box-shadow: 0 2px 4px rgba(0,0,0,.22); }
.grp { display: flex; flex-direction: column; height: 88px; margin-top: 1px; border-right: 1px solid #c6c6c6; flex: none; }
.gi { display: block; flex: none; overflow: visible; }
.g-clip { width: 93px; }
.g-font { width: 214px; }
.g-align { width: 173px; }
.g-num { width: 95px; }
.g-sty { width: 176px; }
.g-cells { width: 91px; }
.g-edit { width: 84px; }
.g-ideas { width: 58px; }
.glabel { position: relative; height: 20px; font-size: 11.300px; line-height: 32px; text-align: center; color: #444; }
.g-clip .glabel { padding-right: 17px; }
.g-font .glabel { padding-right: 16px; }
.g-align .glabel { padding-right: 15px; }
.g-num .glabel { padding-right: 16px; }
.g-sty .glabel { padding-left: 10px; padding-right: 7px; }
.launch { position: absolute; right: 5px; top: 12px; }
.collapse { position: absolute; right: 10px; top: 81px; }
.gi text { font-family: "Open Sans", sans-serif; }
.r9 { font-size: 8.500px; }
.r10 { font-size: 10px; }
.r12 { font-size: 11.350px; fill: #444; }
.r13 { font-size: 13px; }
.r14 { font-size: 14px; }
.r16 { font-size: 16px; }
.r18 { font-size: 18px; }
.r22 { font-size: 24px; }
.dk { fill: #444; }
.gy { fill: #a6a6a6; }
.st { fill: #666; font-family: "Open Sans", sans-serif; }
.bd { font-weight: 700; }
.it { font-style: italic; font-family: "Liberation Serif", serif; }
.ar { fill: #555; }
.ar2 { fill: #b5b5b5; }
.fbar { display: flex; align-items: flex-start; height: 47px; flex: none; padding: 11px 10px 0 5px; }
.namebox { display: flex; align-items: center; justify-content: space-between; width: 102px; height: 25px; padding: 0 6px; font-size: 12px; color: #444; background: #fff; border: 1px solid #c6c6c6; }
.fdots { display: flex; flex-direction: column; gap: 3px; margin: 6px 15px 0 13px; }
.fdots i, .sdots i { width: 2px; height: 2px; background: #999; }
.fbtns { display: flex; align-items: center; gap: 22px; width: 109px; height: 25px; padding-left: 13px; background: #fff; border: 1px solid #c6c6c6; }
.fx { font-family: "Liberation Serif", serif; font-style: italic; font-size: 14px; color: #555; margin-left: 3px; }
.finput { display: flex; align-items: center; justify-content: flex-end; flex: 1; height: 25px; margin-left: 4px; padding-right: 3px; background: #fff; border: 1px solid #c6c6c6; }
.xl-main { display: flex; flex: 1; min-height: 0; }
.workbook { display: flex; flex-direction: column; width: 699px; flex: none; }
.sheet { display: flex; height: 782px; flex: none; }
.gridwrap { position: relative; width: 678px; flex: none; }
.colhead { display: grid; grid-template-columns: 26px repeat(10, 64px); height: 20px; font-size: 12px; line-height: 19px; color: #333; text-align: center; border-bottom: 1px solid #ababab; }
.colhead span { border-right: 1px solid #c0c0c0; }
.corner { display: flex; align-items: flex-end; justify-content: flex-end; padding: 0 4px 3px 0; }
.gridbody { display: flex; height: 761px; }
.rowhead { width: 26px; flex: none; overflow: hidden; background: #e6e6e6; }
.rowhead div { height: 20px; font-size: 12.500px; line-height: 21px; text-align: center; color: #333; border-bottom: 1px solid #ababab; }
.cells { flex: 1; background: #fff; border-right: 1px solid #ababab; border-bottom: 1px solid #ababab; }
.slicer { position: absolute; left: 35px; top: 103px; width: 147px; height: 264px; padding: 0 8px 0 9px; background: #fff; border: 1px solid #5b9bd5; }
.sl-head { display: flex; align-items: center; justify-content: space-between; height: 27px; margin-bottom: 4px; font-size: 12.500px; color: #222; border-bottom: 1px solid #5b9bd5; }
.sl-item { height: 24.500px; margin-bottom: 3.500px; padding-left: 8px; font-size: 12.500px; line-height: 23px; color: #222; background: #fff; border: 1px solid #c9c9c9; border-radius: 3px; }
.sl-on { background: #bdd7ee; border-color: #8fa6ba; }
.chartobj { position: absolute; left: 184px; top: 98px; }
.btn-f { fill: #cfcfcf; }
.cb { font-size: 11px; fill: #333; }
.ct-title { font-size: 17px; font-weight: 700; fill: #eaeaea; letter-spacing: 1.400px; }
.ct-y { font-size: 11.200px; fill: #d6d6d6; }
.ct-x { font-size: 11px; fill: #cfcfcf; }
.vscroll { display: flex; flex-direction: column; width: 14px; margin-left: 4px; flex: none; }
.sb-btn { display: flex; align-items: center; justify-content: center; height: 17px; flex: none; background: #fff; border: 1px solid #ababab; margin-top: 2px; }
.vs-thumb { height: 728px; margin-top: 1px; flex: none; background: #fff; border: 1px solid #ababab; }
.sb-plain { height: 14px; border: 0; margin-top: 15px; background: #e6e6e6; }
.sheetbar { display: flex; align-items: flex-start; height: 27px; flex: none; border-bottom: 1px solid #c6c6c6; }
.sheetnav { width: 100px; height: 24px; flex: none; padding-top: 7px; padding-left: 10px; }
.stab { width: 65px; height: 20px; margin-top: 3px; padding-left: 12px; font-size: 12px; line-height: 18px; color: #444; border-left: 1px solid #ababab; flex: none; }
.stab-on { width: 56px; height: 25px; margin-top: 0; padding: 3px 0 0 11px; font-weight: 700; color: #217346; background: #fff; border-left: 1px solid #ababab; border-top: 1px solid #ababab; border-bottom: 3px solid #217346; letter-spacing: -.3px; }
.smore { margin-left: 8px; width: 16px; font-size: 13px; font-weight: 700; line-height: 22px; color: #217346; flex: none; }
.splus { margin: 3px 0 0 8px; flex: none; }
.sdots { display: flex; flex-direction: column; gap: 3px; margin: 6px 0 0 20px; flex: none; }
.hscroll { display: flex; height: 15px; margin: 6px 0 0 14px; flex: none; }
.hs-btn { display: flex; align-items: center; justify-content: center; width: 15px; background: #fff; border: 1px solid #ababab; flex: none; }
.hs-thumb { width: 176px; background: #fff; border: 1px solid #ababab; border-left: 0; }
.hs-track { width: 36px; background: #d6d6d6; }
.hs-r { margin-left: 2px; }
.pane { display: flex; flex-direction: column; width: 351px; height: 808px; flex: none; padding: 13px 15px 0 12px; background: #e6e6e6; border-left: 1px solid #bcbcbc; }
.pane-top { display: flex; align-items: center; justify-content: space-between; height: 26px; flex: none; padding-left: 2px; }
.pane-title { font-size: 20px; font-weight: 300; color: #217346; white-space: nowrap; }
.pt-ic { margin: 0 -3px 4px 0; }
.pane-tabs { display: flex; gap: 27px; height: 27px; margin-top: 4px; flex: none; padding-left: 2px; font-size: 11.500px; line-height: 20px; color: #333; }
.pt-on { font-weight: 700; border-bottom: 3px solid #217346; padding: 0 1px; height: 27px; }
.choose { display: flex; align-items: flex-start; justify-content: space-between; height: 26px; flex: none; padding-left: 1px; font-size: 11.500px; line-height: 26px; color: #444; }
.gear { display: flex; align-items: center; justify-content: center; gap: 5px; width: 44px; height: 26px; background: #fff; border: 1px solid #c0c0c0; }
.psearch { display: flex; align-items: center; justify-content: space-between; height: 20px; margin-top: 14px; flex: none; padding: 0 1px 2px; font-size: 11.200px; color: #777; background: #fff; border: 1px solid #b5b5b5; }
.fields { display: flex; height: 258px; margin-top: 16px; flex: none; background: #fff; }
.flist { flex: 1; padding: 1px 0 0 36px; overflow: hidden; font-size: 11.500px; color: #444; }
.fgroup { position: relative; display: flex; align-items: center; height: 11px; }
.fgroup b { font-weight: 700; color: #444; }
.tree { position: absolute; left: -33px; top: -2px; }
.frow { display: flex; align-items: center; height: 22px; white-space: nowrap; }
.frow b { font-weight: 700; }
.cb-box { display: flex; align-items: center; justify-content: center; width: 13px; height: 13px; flex: none; background: #fff; border: 1px solid #8a8a8a; }
.fxs { width: 19px; margin-left: 5px; flex: none; font-family: "Liberation Serif", serif; font-style: italic; font-size: 15px; color: #666; }
.fscroll { display: flex; flex-direction: column; width: 16px; flex: none; background: #f0f0f0; border-right: 1px solid #fff; padding-top: 2px; }
.fs-btn { display: flex; align-items: center; justify-content: center; height: 15px; flex: none; background: #fff; border: 1px solid #ababab; }
.fs-thumb { height: 86px; flex: none; background: #fff; border: 1px solid #ababab; }
.fs-end { margin-top: 138px; }
.drag { height: 21px; margin: 16px -8px 0 2px; flex: none; padding: 4px 0 0 2px; font-size: 11.500px; line-height: 16px; color: #444; border-top: 1px dotted #bbb; }
.zones { display: grid; grid-template-columns: 160px 160px; margin: 16px 0 0 3px; flex: none; }
.zone { height: 150px; }
.z-tl { padding-right: 6px; border-right: 1px solid #bcbcbc; border-bottom: 1px solid #bcbcbc; }
.z-tr { padding-left: 2px; border-bottom: 1px solid #bcbcbc; }
.z-bl { padding: 7px 6px 0 0; border-right: 1px solid #bcbcbc; }
.z-br { padding: 7px 0 0 2px; }
.zh { display: flex; align-items: center; gap: 7px; height: 20px; padding: 0 0 5px 4px; font-size: 11.500px; color: #444; }
.z-bl .zh, .z-br .zh { height: 19px; }
.zbox { height: 123px; padding: 2px 1px; background: #fdfdfd; }
.z-bl .zbox, .z-br .zbox { height: 124px; }
.pill { display: flex; align-items: center; justify-content: space-between; height: 19px; padding: 0 8px 0 6px; font-size: 11.500px; color: #444; background: #fff; border: 1px solid #b5b5b5; }
.defer { display: flex; align-items: center; height: 21px; margin: 20px 0 0 3px; flex: none; font-size: 11.500px; color: #444; }
.defer span:first-of-type { margin-left: 6px; }
.cb-white { border-color: #a6a6a6; }
.update { margin-left: auto; width: 46px; height: 21px; line-height: 20px; text-align: center; color: #a6a6a6; background: #f8f8f8; }
.status { display: flex; justify-content: flex-end; height: 22px; flex: none; margin-top: 0; background: #f3f2f1; }

/* ---------- taskbar ---------- */
.taskbar { grid-column: 1 / 3; display: flex; height: 41px; background: #2b2b2b; border-top: 1px solid #4a4a4a; color: #eee; }
.win { flex: none; margin-top: -1px; }
.tsearch { display: flex; align-items: center; width: 345px; flex: none; padding: 0 15px 0 10px; background: #f0f0f0; color: #222; font-size: 13.900px; }
.tsearch span { flex: 1; margin-left: 10px; }
.tv { margin: 12px 0 0 15px; flex: none; }
.tk { display: flex; align-items: center; justify-content: center; height: 40px; flex: none; }
.tk-fe { width: 40px; margin-left: 23px; border-bottom: 3px solid #76b9ed; }
.tk-ch { width: 45px; margin-left: 5px; background: #4b4b4b; border-bottom: 3px solid #76b9ed; }
.tk-xl { width: 40px; margin-left: 8px; border-bottom: 3px solid #76b9ed; }
.tray { display: flex; align-items: center; margin-left: auto; height: 40px; }
.tr-up { margin-left: 20px; }
.tr-net { margin-left: 9px; }
.tr-vol { margin-left: 8px; }
.clock { display: flex; flex-direction: column; align-items: center; width: 60px; margin-left: 6px; font-size: 11.500px; line-height: 18px; color: #eee; }
.tr-note { margin-left: 13px; }
.showdesk { width: 1px; height: 40px; margin-left: 20px; margin-right: 4px; background: #666; }
```
